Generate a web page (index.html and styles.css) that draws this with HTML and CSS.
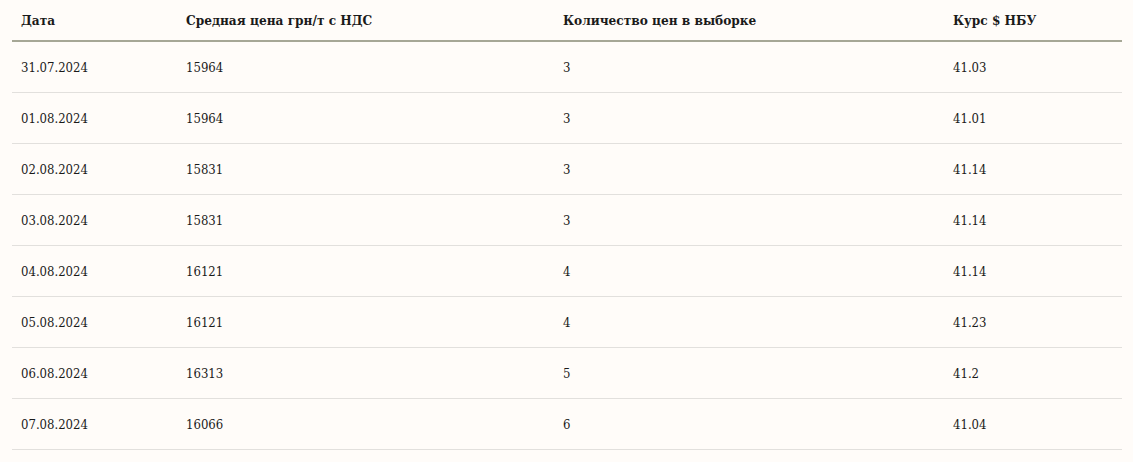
FILE: index.html
```html
<!DOCTYPE html>
<html lang="ru">
<head>
<meta charset="utf-8">
<link rel="stylesheet" href="styles.css">
</head>
<body>
<div class="wrap">
<table class="prices">
<thead>
<tr><th class="c1">Дата</th><th class="c2">Средная цена грн/т с НДС</th><th class="c3">Количество цен в выборке</th><th class="c4">Курс $ НБУ</th></tr>
</thead>
<tbody>
<tr><td>31.07.2024</td><td>15964</td><td>3</td><td>41.03</td></tr>
<tr><td>01.08.2024</td><td>15964</td><td>3</td><td>41.01</td></tr>
<tr><td>02.08.2024</td><td>15831</td><td>3</td><td>41.14</td></tr>
<tr><td>03.08.2024</td><td>15831</td><td>3</td><td>41.14</td></tr>
<tr><td>04.08.2024</td><td>16121</td><td>4</td><td>41.14</td></tr>
<tr><td>05.08.2024</td><td>16121</td><td>4</td><td>41.23</td></tr>
<tr><td>06.08.2024</td><td>16313</td><td>5</td><td>41.2</td></tr>
<tr><td>07.08.2024</td><td>16066</td><td>6</td><td>41.04</td></tr>
</tbody>
</table>
</div>
</body>
</html>
```
FILE: styles.css
```css
html, body {
  margin: 0;
  padding: 0;
  background: #fffcf9;
}
body {
  font-family: "Roboto Slab", "DejaVu Serif Condensed", "DejaVu Serif", serif;
  color: #1a1a1a;
  font-size: 13px;
}
.wrap {
  padding: 0 11px 0 12px;
}
.prices {
  width: 1110px;
  border-collapse: collapse;
  table-layout: fixed;
}
.prices th {
  text-align: left;
  font-weight: bold;
  font-size: 13.5px;
  height: 41px;
  padding: 0 9px;
  box-sizing: border-box;
  border-bottom: 2px solid #a6a796;
  vertical-align: middle;
}
.prices td {
  height: 51px;
  padding: 1px 9px 0;
  box-sizing: border-box;
  border-bottom: 1px solid #e2e0dd;
  vertical-align: middle;
}
.c1 { width: 165px; }
.c2 { width: 377px; }
.c3 { width: 390px; }
.c4 { width: 178px; }
```
